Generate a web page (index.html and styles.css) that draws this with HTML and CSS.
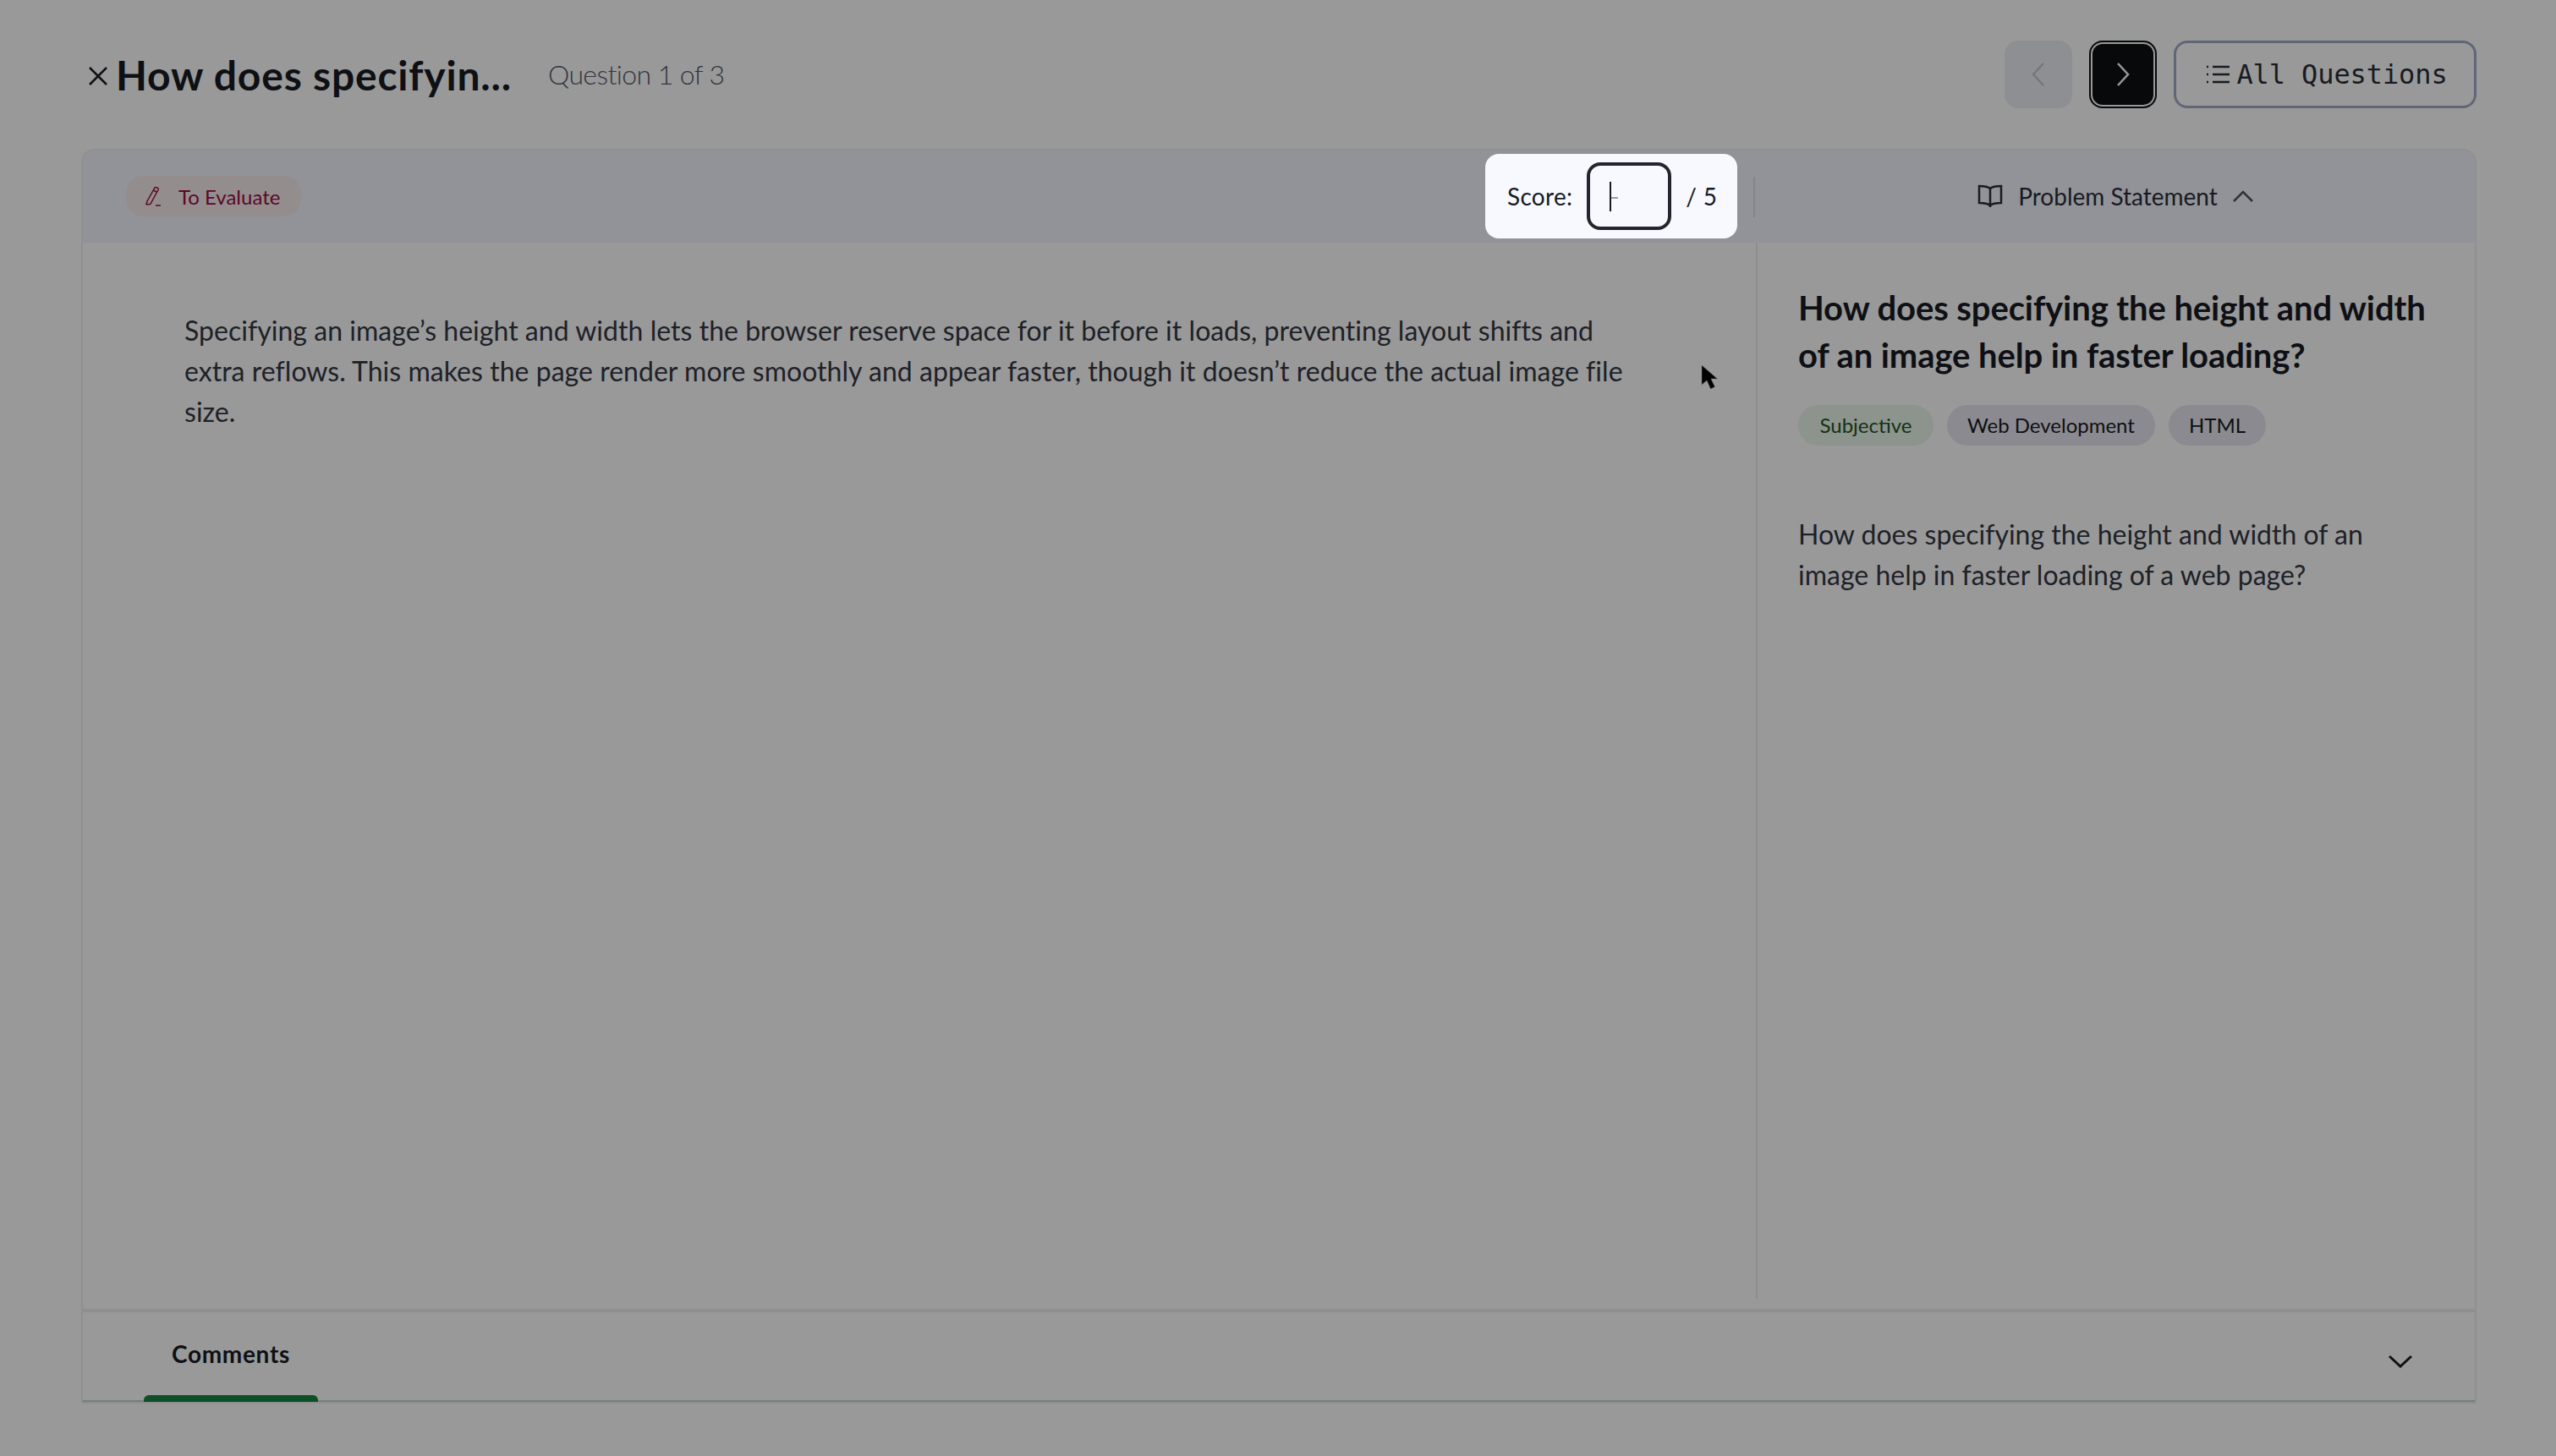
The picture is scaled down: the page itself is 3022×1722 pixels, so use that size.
FILE: index.html
```html
<!DOCTYPE html>
<html lang="en">
<head>
    <meta charset="UTF-8">
    <title>Evaluate - Question 1 of 3</title>
    <link rel="stylesheet" href="styles.css">
</head>
<body>
    <header class="top-bar">
        <div class="top-left">
            <svg class="close-icon" viewBox="0 0 24 24"><path d="M2 2 22 22M22 2 2 22"/></svg>
            <h1>How does specifyin...</h1>
            <span class="counter">Question 1 of 3</span>
        </div>
        <div class="top-right">
            <button class="nav-btn prev"><svg viewBox="0 0 16 30"><path d="M14 2 2 15l12 13"/></svg></button>
            <button class="nav-btn next"><svg viewBox="0 0 16 30"><path d="M2 2l12 13L2 28"/></svg></button>
            <button class="all-btn">
                <svg viewBox="0 0 28 24"><path d="M8 3h20M8 12h20M8 21h20"/><path class="dots" d="M1 3h2M1 12h2M1 21h2"/></svg>
                All Questions
            </button>
        </div>
    </header>

    <section class="card">
        <div class="toolbar">
            <div class="toolbar-left">
                <span class="status-pill">
                    <svg viewBox="0 0 20 26"><path d="M3 19 12 3c1-1.500 5 .5 4 2.500L7 22c-1 1-4 1-5 .5zM10.500 6l4.500 2.500M13 24h6"/></svg>
                    To Evaluate
                </span>
                <div class="score-box">
                    <label>Score:</label>
                    <div class="score-input"><i class="caret"></i><i class="dash"></i></div>
                    <span class="score-max">/ 5</span>
                </div>
            </div>
            <div class="toolbar-right">
                <svg class="book-icon" viewBox="0 0 30 28"><path d="M15 5C12 2.500 7 2 2 2v20c5 0 10 .5 13 3 3-2.500 8-3 13-3V2c-5 0-10 .5-13 3zM15 5v22"/></svg>
                <span>Problem Statement</span>
                <svg class="chevron-up" viewBox="0 0 24 14"><path d="M1 13 12 2l11 11"/></svg>
            </div>
        </div>

        <div class="panes">
            <div class="answer">
                <p>Specifying an image’s height and width lets the browser reserve space for it before it loads, preventing layout shifts and extra reflows. This makes the page render more smoothly and appear faster, though it doesn’t reduce the actual image file size.</p>
            </div>
            <aside class="problem">
                <h2>How does specifying the height and width of an image help in faster loading?</h2>
                <div class="chips">
                    <span class="chip green">Subjective</span>
                    <span class="chip">Web Development</span>
                    <span class="chip">HTML</span>
                </div>
                <p>How does specifying the height and width of an image help in faster loading of a web page?</p>
            </aside>
        </div>

        <div class="comments">
            <div class="comments-tab">Comments</div>
            <svg class="chevron-down" viewBox="0 0 28 16"><path d="M1 2 14 14 27 2"/></svg>
        </div>
    </section>

    <div class="backdrop"></div>

    <svg class="cursor" viewBox="0 0 20 30"><path d="M1 0v23l6-5 4.500 10 5-2.500L12 16h7.500z"/></svg>
</body>
</html>
```

FILE: styles.css
```css
* {
    box-sizing: border-box;
}

body {
    margin: 0;
    height: 1722px;
    padding: 48px 94px 0 96px;
    background: #fff;
    color: #181b25;
    font-family: 'Lato', sans-serif;
    overflow: hidden;
}

.top-bar {
    display: flex;
    align-items: center;
    justify-content: space-between;
    height: 80px;
}

.top-left {
    display: flex;
    align-items: center;
}

.close-icon {
    width: 24px;
    height: 24px;
    margin: 4px 9px 0 8px;
    fill: none;
    stroke: #181b25;
    stroke-width: 2.5;
}

h1 {
    margin: 0;
    font-size: 48px;
    font-weight: 700;
    letter-spacing: 0.8px;
}

.counter {
    margin: -2px 0 0 43px;
    font-size: 32px;
    font-weight: 300;
    letter-spacing: -0.6px;
    color: #575a6c;
}

.top-right {
    display: flex;
    gap: 20px;
}

button {
    font-family: inherit;
    border: none;
    padding: 0;
}

.nav-btn {
    width: 80px;
    height: 80px;
    border-radius: 16px;
    display: flex;
    align-items: center;
    justify-content: center;
}

.nav-btn svg {
    width: 16px;
    height: 30px;
    fill: none;
    stroke-width: 2.5;
}

.prev {
    background: #edeef6;
}

.prev svg {
    stroke: #c2c5d4;
}

.next {
    background: #0e0f12;
    box-shadow: inset 0 0 0 2px #0e0f12, inset 0 0 0 4px #fff;
}

.next svg {
    stroke: #fff;
}

.all-btn {
    width: 358px;
    height: 80px;
    display: flex;
    align-items: center;
    justify-content: center;
    gap: 8px;
    padding-left: 4px;
    background: #fff;
    border: 3px solid #a0aac9;
    border-radius: 16px;
    color: #2b2e39;
    font-family: 'DejaVu Sans Mono', monospace;
    font-size: 32px;
    letter-spacing: -0.1px;
}

.all-btn svg {
    width: 28px;
    height: 24px;
    fill: none;
    stroke: #2b2e39;
    stroke-width: 2.500;
}

.card {
    height: 1484px;
    margin-top: 48px;
    border: 2px solid #eeeef4;
    border-radius: 16px 16px 0 0;
    display: flex;
    flex-direction: column;
}

.toolbar {
    display: flex;
    height: 109px;
    padding-bottom: 1px;
    background: #f4f6fd;
    border-radius: 14px 14px 0 0;
}

.toolbar-left {
    width: 1978px;
    padding: 0 0 0 51px;
    display: flex;
    align-items: center;
    justify-content: space-between;
}

.status-pill {
    display: flex;
    align-items: center;
    gap: 20px;
    height: 48px;
    width: 207px;
    padding-left: 22px;
    border-radius: 20px;
    background: #f7ebed;
    color: #960f40;
    font-size: 24px;
}

.status-pill svg {
    width: 20px;
    height: 26px;
    fill: none;
    stroke: #960f40;
    stroke-width: 1.500;
}

/* sits above the backdrop, rest of the page stays dimmed */
.score-box {
    position: relative;
    z-index: 10;
    display: flex;
    align-items: center;
    width: 298px;
    height: 100px;
    margin-right: 22px;
    padding-left: 26px;
    background: #f7f9ff;
    border-radius: 16px;
    font-size: 28px;
    letter-spacing: 0.3px;
    color: #181b25;
}

.score-input {
    position: relative;
    flex: none;
    width: 100px;
    height: 80px;
    margin: 0 17px;
    border: 4px solid #23252f;
    border-radius: 16px;
    background: #f7f9ff;
}

.score-max {
    white-space: nowrap;
}

.caret {
    position: absolute;
    left: 23px;
    top: 19px;
    width: 2px;
    height: 35px;
    background: #181b25;
}

.dash {
    position: absolute;
    left: 25px;
    top: 37px;
    width: 8px;
    height: 2px;
    background: #9a9ca8;
}

.toolbar-right {
    flex: 1;
    display: flex;
    align-items: center;
    justify-content: center;
    gap: 18px;
    font-size: 28px;
    color: #2b2e39;
    position: relative;
}

.toolbar-right::before {
    content: '';
    position: absolute;
    left: -3px;
    top: 31px;
    width: 2px;
    height: 48px;
    background: #dcdde3;
}

.book-icon {
    width: 30px;
    height: 28px;
    fill: none;
    stroke: #2b2e39;
    stroke-width: 2.500;
}

.chevron-up {
    width: 24px;
    height: 14px;
    fill: none;
    stroke: #50535f;
    stroke-width: 2.500;
}

.panes {
    flex: 1;
    display: flex;
    padding-bottom: 12px;
}

.answer {
    width: 1978px;
    padding: 80px 148px 0 120px;
    font-size: 32px;
    letter-spacing: 0.03px;
    line-height: 48px;
    color: #343744;
}

.answer p {
    margin: 0;
}

.problem {
    flex: 1;
    border-left: 2px solid #ecedf2;
    padding: 49px 55px 0 48px;
}

h2 {
    margin: 0;
    font-size: 40px;
    line-height: 56px;
    font-weight: 700;
    letter-spacing: -0.1px;
}

.chips {
    display: flex;
    gap: 16px;
    margin-top: 31px;
}

.chip {
    display: flex;
    align-items: center;
    height: 48px;
    padding: 0 24px 2px;
    border-radius: 24px;
    background: #e8e6f0;
    font-size: 24px;
}

.chip.green {
    padding: 0 25.5px 2px;
    background: #ebf6ec;
    color: #215421;
}

.problem p {
    margin: 81px 0 0;
    font-size: 32px;
    line-height: 48px;
    color: #343744;
}

.comments {
    height: 110px;
    border-top: 4px solid #eeeef4;
    border-bottom: 2px solid #bcd9c8;
    display: flex;
    justify-content: space-between;
    padding: 0 74px 0 72px;
    position: relative;
}

.comments-tab {
    position: relative;
    width: 206px;
    height: 104px;
    padding-top: 32px;
    text-align: center;
    font-size: 28px;
    font-weight: 700;
    letter-spacing: 0.7px;
}

.comments-tab::after {
    content: '';
    position: absolute;
    left: 0;
    right: 0;
    bottom: -2px;
    height: 8px;
    border-radius: 6px 6px 0 0;
    background: #178543;
}

.chevron-down {
    width: 28px;
    height: 16px;
    margin-top: 50px;
    fill: none;
    stroke: #181b25;
    stroke-width: 3;
}

.backdrop {
    position: fixed;
    inset: 0;
    z-index: 5;
    background: rgba(0, 0, 0, 0.4);
}

.cursor {
    position: absolute;
    left: 2011px;
    top: 432px;
    z-index: 20;
    width: 20px;
    height: 30px;
    fill: #000;
    stroke: #777;
    stroke-width: 0.5;
}
```
